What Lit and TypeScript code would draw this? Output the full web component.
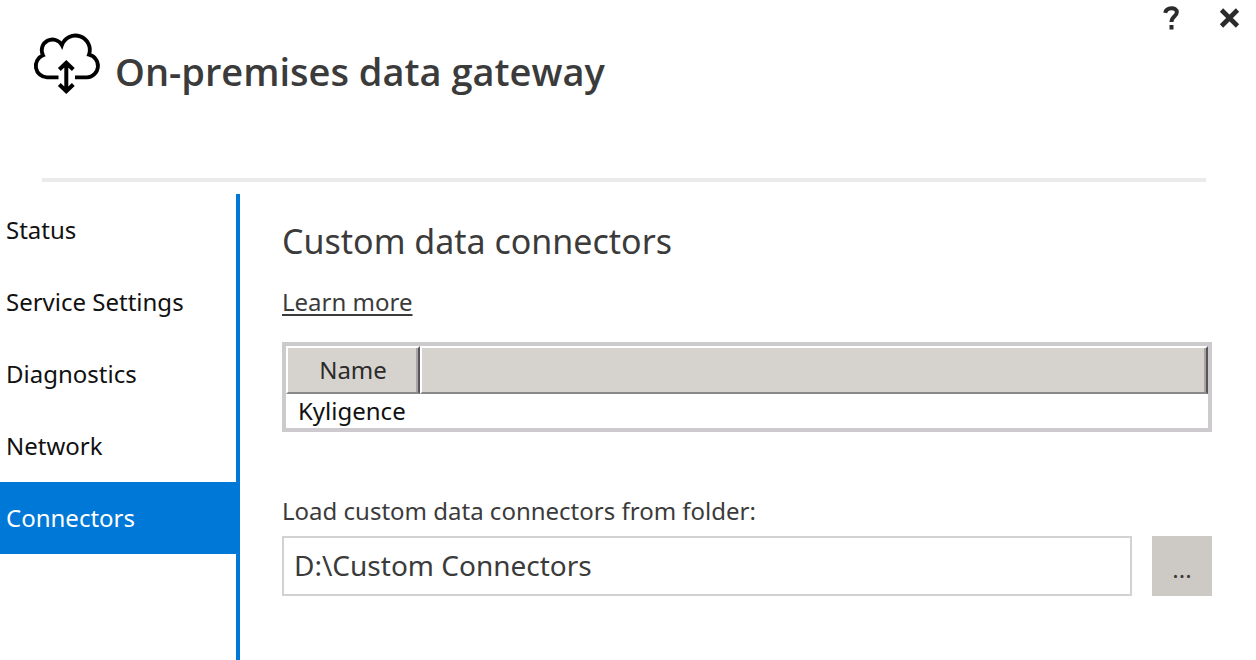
import { LitElement, html, css } from "lit";
import { customElement, state } from "lit/decorators.js";
import { classMap } from "lit/directives/class-map.js";

@customElement("app-root")
export class AppRoot extends LitElement {
  @state() private section = "Connectors";
  @state() private folder = "D:\\Custom Connectors";

  private sections = ["Status", "Service Settings", "Diagnostics", "Network", "Connectors"];
  private connectors = ["Kyligence"];

  static styles = css`
    :host {
      display: flex;
      flex-direction: column;
      min-height: 100vh;
      background: #fff;
      color: #3b3b3b;
      font: 24px/32px "Noto Sans", "Open Sans", sans-serif;
    }
    * { box-sizing: border-box; }
    button { font: inherit; color: inherit; border: 0; padding: 0; background: none; }
    .header {
      display: flex;
      align-items: flex-start;
      justify-content: space-between;
      height: 178px;
      padding: 0 12px 0 33px;
    }
    .brand { display: flex; gap: 14px; padding-top: 31px; }
    .logo { width: 68px; height: 64px; flex: none; }
    .title { margin: 0; padding-top: 14px; font-size: 38px; line-height: 52px; font-weight: 600; font-family: "Open Sans", "Noto Sans", sans-serif; }
    .window { display: flex; gap: 30px; padding-top: 4px; }
    .tool { width: 28px; height: 28px; display: grid; place-items: center; }
    .tool svg { width: 28px; height: 28px; }
    .rule { height: 4px; margin: 0 50px 0 42px; border: 0; background: #ebebeb; }
    .body { flex: 1; display: flex; margin-top: 12px; }
    .nav { width: 240px; flex: none; border-right: 4px solid #0078d7; }
    .item { display: flex; align-items: center; height: 72px; padding: 0 6px; color: #111; text-decoration: none; }
    .item.active { background: #0078d7; color: #fff; }
    .content { flex: 1; min-width: 0; padding: 24px 44px 24px 42px; }
    .heading { margin: 0; font-size: 34px; line-height: 46px; font-weight: 400; }
    .more { display: table; margin-top: 22px; color: inherit; text-underline-offset: 3px; text-decoration-thickness: 2px; }
    .grid { width: 100%; margin-top: 24px; border: 4px solid #cccacc; border-collapse: separate; border-spacing: 0; color: #111; }
    .grid th {
      height: 48px;
      padding: 0;
      font-weight: 400;
      background: #d6d3ce;
      border: 2px solid #fff;
      border-right-color: #57555a;
      border-bottom-color: #8a878a;
      box-shadow: inset -2px 0 #a8a5a4;
    }
    .grid .name { width: 134px; color: #2b2b2b; }
    .grid td { height: 34px; padding: 0 0 0 12px; line-height: 34px; }
    .label { display: block; margin-top: 63px; }
    .row { display: flex; gap: 20px; margin-top: 9px; }
    .folder {
      flex: 1;
      min-width: 0;
      height: 60px;
      padding: 0 10px 2px;
      border: 2px solid #d2d2d2;
      border-radius: 0;
      background: #fff;
      color: inherit;
      font: inherit;
      font-size: 28px;
      outline: 0;
    }
    .browse { width: 60px; height: 60px; padding-top: 6px; background: #cdc9c4; }
  `;

  render() {
    return html`
      <header class="header">
        <div class="brand">
          <svg class="logo" viewBox="0 0 68 64" fill="none" stroke="#000" stroke-width="3.8" aria-hidden="true">
            <path d="M25.5 46.3H13.9A11.4 11.4 0 0 1 10 24.3A10.6 10.6 0 0 1 28.9 14.2A14.2 14.2 0 1 1 56 23.6A11.5 11.5 0 0 1 54 46.3H42" />
            <path d="M33.3 32V61M26.3 38.5L33.3 31.7L40.3 38.5M26.3 53.5L33.3 60.3L40.3 53.5" stroke-width="4" />
          </svg>
          <h1 class="title">On-premises data gateway</h1>
        </div>
        <div class="window">
          <button class="tool" aria-label="Help">
            <svg viewBox="0 0 28 28" fill="none" stroke="#2b2b2b" stroke-width="4" aria-hidden="true">
              <path d="M7.2 8.8C8.5 2.8 18.8 2.8 18.8 8.2C18.8 12.5 13.5 12 13.5 18M13.5 21V25.5" />
            </svg>
          </button>
          <button class="tool" aria-label="Close">
            <svg viewBox="0 0 28 28" fill="none" stroke="#2b2b2b" stroke-width="4.6" aria-hidden="true">
              <path d="M5.5 6L21.5 22M21.5 6L5.5 22" />
            </svg>
          </button>
        </div>
      </header>
      <hr class="rule" />
      <div class="body">
        <nav class="nav">
          ${this.sections.map(
            (s) => html`<a href="#" class=${classMap({ item: true, active: s === this.section })}
              @click=${(e: Event) => { e.preventDefault(); this.section = s; }}>${s}</a>`
          )}
        </nav>
        <main class="content">
          <h2 class="heading">Custom data connectors</h2>
          <a class="more" href="#">Learn more</a>
          <table class="grid">
            <thead><tr><th class="name" scope="col">Name</th><th></th></tr></thead>
            <tbody>${this.connectors.map((c) => html`<tr><td colspan="2">${c}</td></tr>`)}</tbody>
          </table>
          <label class="label" for="folder">Load custom data connectors from folder:</label>
          <div class="row">
            <input id="folder" class="folder" type="text" .value=${this.folder}
              @input=${(e: Event) => { this.folder = (e.target as HTMLInputElement).value; }} />
            <button class="browse" aria-label="Browse">...</button>
          </div>
        </main>
      </div>
    `;
  }
}
